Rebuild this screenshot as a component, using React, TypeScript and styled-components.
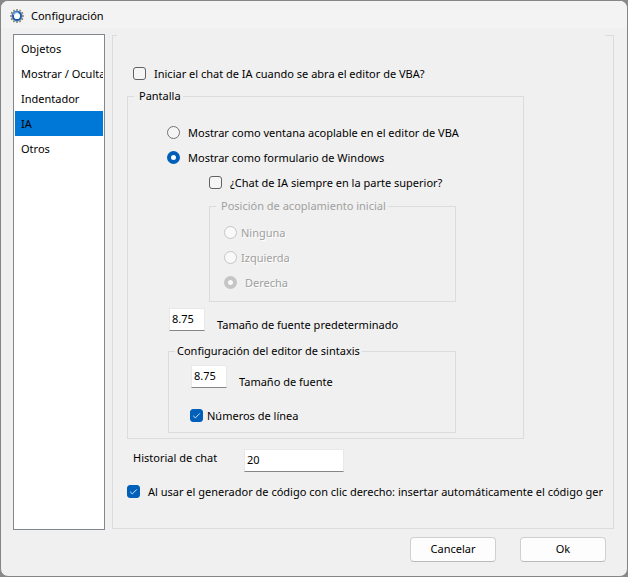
import React, { useId, useState } from "react";
import styled, { createGlobalStyle } from "styled-components";

const GlobalStyle = createGlobalStyle`
  *, *::before, *::after { box-sizing: border-box; }
  body {
    margin: 0;
    background: #8a888a;
    color: #000;
    font: 11px/17px "Noto Sans", "Open Sans", sans-serif;
  }
  button, input { font: inherit; color: inherit; }
`;

const Window = styled.main`
  display: flex;
  flex-direction: column;
  min-height: 100vh;
  border: 1px solid #858585;
  border-radius: 8px;
  background: #f0f0f0;
  overflow: hidden;
`;

const TitleBar = styled.header`
  display: flex;
  align-items: center;
  gap: 7px;
  height: 27px;
  padding: 2px 9px 0;
  background: #f3f3f3;
`;

const Title = styled.h1`
  margin: 0;
  font-size: 11px;
  font-weight: 400;
`;

const Body = styled.div`
  flex: 1;
  display: grid;
  grid-template-columns: 92px minmax(0, 1fr);
  gap: 7px;
  padding: 6px 13px 0 12px;
`;

const Sections = styled.nav`
  display: flex;
  flex-direction: column;
  padding: 1px;
  border: 1px solid #828790;
  background: #fff;
  overflow: hidden;
`;

const SectionButton = styled.button<{ $active: boolean }>`
  flex: none;
  height: 25px;
  padding: 0 0 0 6px;
  border: 0;
  background: ${(p) => (p.$active ? "#0078d7" : "transparent")};
  text-align: left;
  white-space: nowrap;
  overflow: hidden;
`;

const Panel = styled.fieldset`
  min-width: 0;
  margin: 1px 0;
  padding: 25px 10px 23px 14px;
  border: 1px solid #dcdcdc;
`;

const PanelGap = styled.legend`
  width: calc(100% + 12px);
  height: 1px;
  margin-left: -10px;
  padding: 0;
`;

const Group = styled.fieldset<{ $left: number; $right: number; $top: number; $pad: string }>`
  min-width: 0;
  margin: ${(p) => `${p.$top}px ${p.$right}px 0 ${p.$left}px`};
  padding: ${(p) => p.$pad};
  border: 1px solid #dcdcdc;
  &:disabled { color: #a0a0a0; }
`;

const GroupTitle = styled.legend<{ $inset: number }>`
  height: 17px;
  margin-left: 6px;
  padding: 0 2px 0 ${(p) => p.$inset}px;
  line-height: 15px;
  white-space: nowrap;
`;

const Row = styled.div<{ $indent?: number; $top?: number }>`
  display: flex;
  align-items: center;
  height: 25px;
  margin-top: ${(p) => p.$top ?? 0}px;
  padding-left: ${(p) => p.$indent ?? 0}px;
  overflow: hidden;
`;

const Choice = styled.label<{ $gap: number; $etched?: boolean }>`
  display: flex;
  align-items: center;
  gap: ${(p) => p.$gap}px;
  white-space: nowrap;
  text-shadow: ${(p) => (p.$etched ? "1px 1px 0 #fff" : "none")};
`;

const Box = styled.span`
  display: grid;
  flex: none;
  width: 13px;
  height: 13px;
  > * { grid-area: 1 / 1; }
  svg { pointer-events: none; }
`;

const BoxInput = styled.input`
  appearance: none;
  width: 13px;
  height: 13px;
  margin: 0;
  border: 1px solid #626262;
  border-radius: 3px;
  background: #f5f5f5;
  &:checked { border-color: #005fb8; background: #005fb8; }
`;

const Radio = styled.input`
  appearance: none;
  flex: none;
  width: 13px;
  height: 13px;
  margin: 0;
  border: 1px solid #727272;
  border-radius: 50%;
  background: #f5f5f5;
  &:checked { border: 4px solid #005fb8; background: #fff; }
  &:disabled { border-color: #c5c5c5; background: #f9f9f9; }
`;

const Field = styled.div<{ $top: number; $indent: number }>`
  display: flex;
  align-items: flex-end;
  gap: 12px;
  height: 25px;
  margin-top: ${(p) => p.$top}px;
  padding-left: ${(p) => p.$indent}px;
`;

const TextInput = styled.input<{ $width: number }>`
  align-self: flex-start;
  width: ${(p) => p.$width}px;
  height: 23px;
  padding: 0 2px 3px;
  border: 1px solid #e8e8e8;
  border-bottom-color: #868686;
  border-radius: 0;
  background: #fff;
  outline: none;
`;

const HistoryField = styled.div`
  display: grid;
  grid-template-columns: 111px 100px;
  align-items: start;
  margin-top: 10px;
  padding-left: 6px;
`;

const Footer = styled.footer`
  display: flex;
  justify-content: flex-end;
  gap: 24px;
  padding: 7px 21px 14px;
`;

const ActionButton = styled.button`
  width: 86px;
  height: 25px;
  padding: 0 0 2px;
  border: 1px solid #d0d0d0;
  border-bottom-color: #bababa;
  border-radius: 4px;
  background: #fdfdfd;
`;

const TEETH = Array.from({ length: 12 }, (_, i) => i * 30);

function GearIcon() {
  return (
    <svg width="14" height="14" viewBox="0 0 14 14" aria-hidden="true">
      <g fill="#85857f">
        {TEETH.map((angle) => (
          <rect key={angle} x="6.2" y="0" width="1.6" height="2.6" transform={`rotate(${angle} 7 7)`} />
        ))}
      </g>
      <circle cx="7" cy="7" r="5.6" fill="#8f979e" />
      <circle cx="7" cy="7" r="4" fill="#fff" stroke="#1a5cab" strokeWidth="1.8" />
      <path d="M3.3 5.8A3.9 3.9 0 0 1 8.4 3.4" fill="none" stroke="#7dbcf0" strokeWidth="1.1" />
    </svg>
  );
}

function CheckOption(props: { label: string; gap: number; initial?: boolean }) {
  const [checked, setChecked] = useState(Boolean(props.initial));
  return (
    <Choice $gap={props.gap}>
      <Box>
        <BoxInput type="checkbox" checked={checked} onChange={(e) => setChecked(e.target.checked)} />
        {checked && (
          <svg width="13" height="13" viewBox="0 0 13 13" fill="none" stroke="#d5e6f5" aria-hidden="true">
            <path d="M3.2 6.8 5.3 8.9 9.8 4.4" />
          </svg>
        )}
      </Box>
      {props.label}
    </Choice>
  );
}

function NumberField(props: { label: string; value: string; top: number; indent: number }) {
  const id = useId();
  return (
    <Field $top={props.top} $indent={props.indent}>
      <TextInput id={id} $width={36} defaultValue={props.value} />
      <label htmlFor={id}>{props.label}</label>
    </Field>
  );
}

const SECTIONS = ["Objetos", "Mostrar / Ocultar", "Indentador", "IA", "Otros"];

export default function App() {
  const [section, setSection] = useState("IA");
  return (
    <>
      <GlobalStyle />
      <Window>
        <TitleBar>
          <GearIcon />
          <Title>Configuración</Title>
        </TitleBar>
        <Body>
          <Sections aria-label="Secciones">
            {SECTIONS.map((name) => (
              <SectionButton key={name} type="button" $active={name === section} onClick={() => setSection(name)}>
                {name}
              </SectionButton>
            ))}
          </Sections>
          <Panel>
            <PanelGap />
            <Row $indent={6}>
              <CheckOption gap={8} label="Iniciar el chat de IA cuando se abra el editor de VBA?" />
            </Row>
            <Group $left={0} $right={79} $top={2} $pad="15px 0 5px">
              <GroupTitle $inset={5}>Pantalla</GroupTitle>
              <Row $indent={39}>
                <Choice $gap={8}>
                  <Radio type="radio" name="display" />
                  Mostrar como ventana acoplable en el editor de VBA
                </Choice>
              </Row>
              <Row $indent={39}>
                <Choice $gap={8}>
                  <Radio type="radio" name="display" defaultChecked />
                  Mostrar como formulario de Windows
                </Choice>
              </Row>
              <Row $indent={81}>
                <CheckOption gap={8} label="¿Chat de IA siempre en la parte superior?" />
              </Row>
              <Group disabled $left={81} $right={67} $top={3} $pad="5px 0 6px">
                <GroupTitle $inset={5}>Posición de acoplamiento inicial</GroupTitle>
                <Row $indent={14}>
                  <Choice $gap={4} $etched>
                    <Radio type="radio" name="dock" />
                    Ninguna
                  </Choice>
                </Row>
                <Row $indent={14}>
                  <Choice $gap={4} $etched>
                    <Radio type="radio" name="dock" />
                    Izquierda
                  </Choice>
                </Row>
                <Row $indent={14}>
                  <Choice $gap={8} $etched>
                    <Radio type="radio" name="dock" defaultChecked />
                    Derecha
                  </Choice>
                </Row>
              </Group>
              <NumberField top={6} indent={41} label="Tamaño de fuente predeterminado" value="8.75" />
              <Group $left={40} $right={67} $top={10} $pad="5px 0 4px">
                <GroupTitle $inset={2}>Configuración del editor de sintaxis</GroupTitle>
                <NumberField top={0} indent={22} label="Tamaño de fuente" value="8.75" />
                <Row $indent={21} $top={13}>
                  <CheckOption gap={4} initial label="Números de línea" />
                </Row>
              </Group>
            </Group>
            <HistoryField>
              <label htmlFor="chat-history">Historial de chat</label>
              <TextInput id="chat-history" $width={100} defaultValue="20" />
            </HistoryField>
            <Row $top={7}>
              <CheckOption
                gap={8}
                initial
                label="Al usar el generador de código con clic derecho: insertar automáticamente el código generado"
              />
            </Row>
          </Panel>
        </Body>
        <Footer>
          <ActionButton type="button">Cancelar</ActionButton>
          <ActionButton type="button">Ok</ActionButton>
        </Footer>
      </Window>
    </>
  );
}
